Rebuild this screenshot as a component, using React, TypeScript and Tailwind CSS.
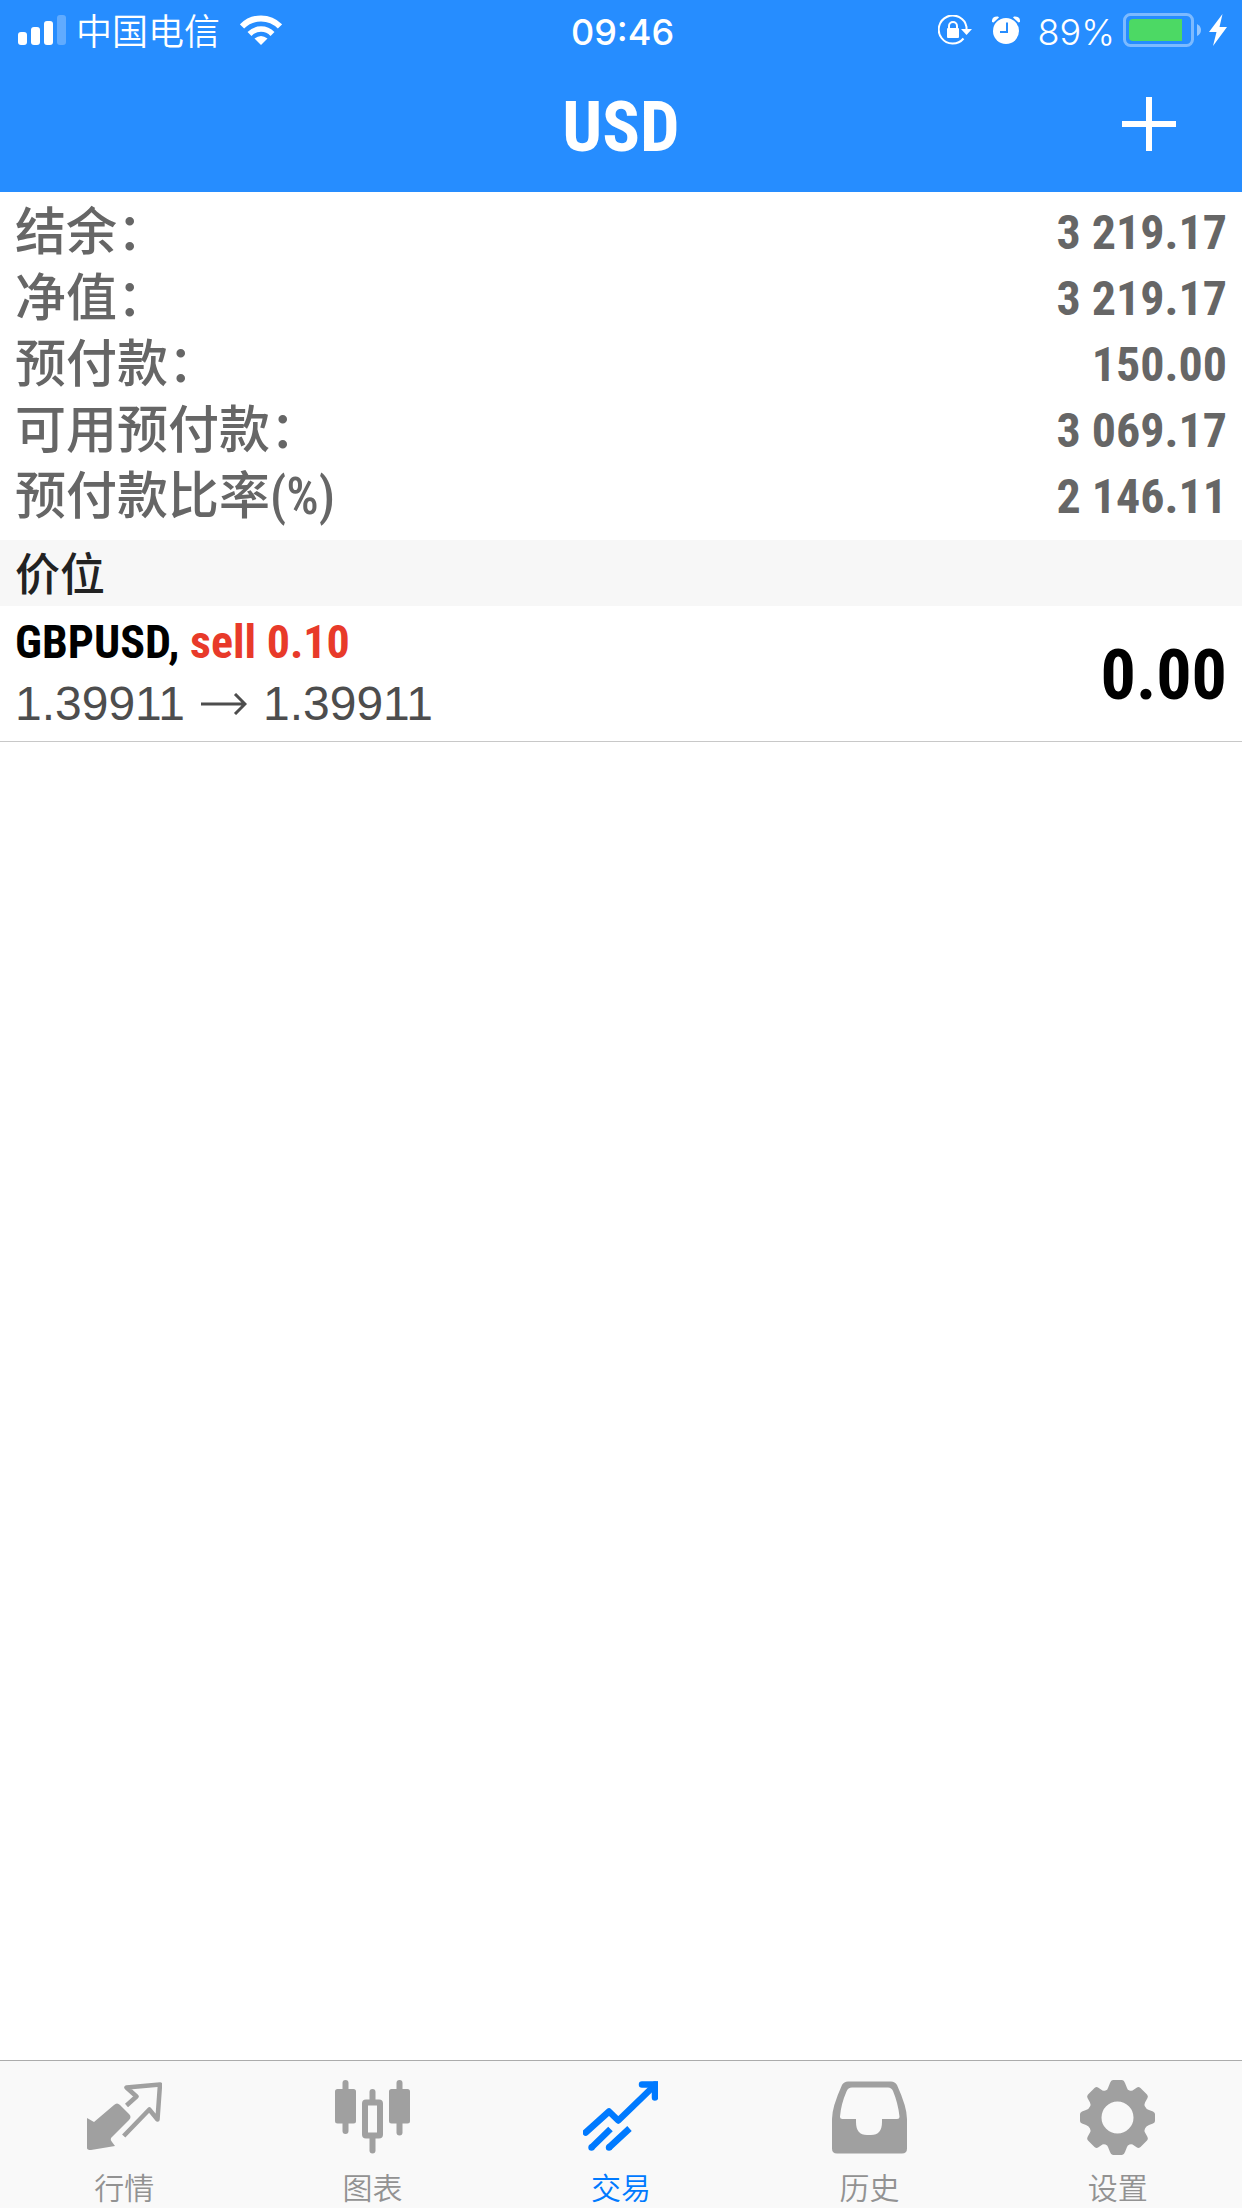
import { FC, ReactNode } from "react";

interface SummaryRow {
  label: string;
  value: string;
}

interface Tab {
  name: string;
  icon: ReactNode;
  active?: boolean;
}

const summary: SummaryRow[] = [
  { label: "结余：", value: "3 219.17" },
  { label: "净值：", value: "3 219.17" },
  { label: "预付款：", value: "150.00" },
  { label: "可用预付款：", value: "3 069.17" },
  { label: "预付款比率(%)", value: "2 146.11" },
];

const QuotesIcon: FC = () => (
  <svg viewBox="0 0 75 75" className="size-[75px]" fill="none">
    <path
      d="M0 38L7 42L27 25Q30 22 33 25L42 34Q45 37 42 40L24 58Q23 60 25 62L28 66L4 70Q0 70 0 68Z"
      fill="currentColor"
    />
    <path
      d="M39.5 25.5L49.5 16.5L39.5 7.5L73 4.5L70.5 39.5L62.3 29.5L36.7 56"
      stroke="currentColor"
      strokeWidth="4.5"
      strokeLinejoin="round"
    />
  </svg>
);

const ChartIcon: FC = () => (
  <svg viewBox="0 0 75 75" className="size-[75px]" fill="currentColor">
    <rect x="0" y="9" width="21" height="34.5" rx="2.5" />
    <rect x="7.5" y="0" width="6" height="54" rx="3" />
    <rect x="54" y="9" width="21" height="34.5" rx="2.5" />
    <rect x="61.5" y="0" width="6" height="55.5" rx="3" />
    <rect x="30" y="22.5" width="15" height="33" rx="1" fill="none" stroke="currentColor" strokeWidth="6" />
    <rect x="34.5" y="9" width="6" height="15" rx="3" />
    <rect x="34.5" y="54" width="6" height="19.5" rx="3" />
  </svg>
);

const TradeIcon: FC = () => (
  <svg viewBox="0 0 75 75" className="size-[75px]" fill="none" stroke="currentColor" strokeWidth="6.5">
    <path d="M2.7 52.5L26 31.5L35.3 40.5L72 5" strokeLinecap="round" strokeLinejoin="round" />
    <path d="M59 4.5H72V17.5" strokeLinecap="round" />
    <path d="M70 1.5H75V8Z" fill="currentColor" stroke="none" />
    <path d="M8.5 67.5L27.5 49M26 67.5L46.5 48.5" />
    <circle cx="8.5" cy="67.5" r="3.2" fill="currentColor" stroke="none" />
    <circle cx="26" cy="67.5" r="3.2" fill="currentColor" stroke="none" />
  </svg>
);

const HistoryIcon: FC = () => (
  <svg viewBox="0 0 75 75" className="size-[75px]" fill="currentColor" fillRule="evenodd">
    <path d="M16 1.5H59Q63 1.5 65 5Q75 27 75 39V68.5Q75 73.5 70 73.5H5Q0 73.5 0 68.5V39Q0 27 10 5Q12 1.5 16 1.5ZM20 7.5Q16 7.5 14.5 11.5Q9 24 8 36.5Q8 39 10.5 39H24V42Q24 55 35 55H39Q50 55 50 42V39H65Q67.5 39 67.5 36.5Q66 23 61 11Q59.5 7.5 56 7.5Z" />
  </svg>
);

const SettingsIcon: FC = () => (
  <svg viewBox="0 0 75 75" className="size-[75px]" fill="currentColor" fillRule="evenodd">
    <path d="M33 0H42Q44 0 45 3L47 8Q47.5 10 49.5 10.5Q52 11.5 54 9.5L57 7.5Q58.5 6.5 60.5 8L67 14.5Q68.5 16 67.5 18L65 22.5Q64 24.5 65 26.5Q66 29 69 30L73 31.5Q75 32.5 75 34V41Q75 42.5 73 43.5L69 45Q66 46 65 48.5Q64 50.5 65 52.5L67.5 57Q68.5 59 67 60.5L60.5 67Q58.5 68.5 57 67.5L54 65.5Q52 63.5 49.5 64.5Q47.5 65 47 67L45 72Q44 75 42 75H33Q31 75 30 72L28 67Q27.5 65 25.5 64.5Q23 63.5 21 65.5L18 67.5Q16.5 68.5 14.5 67L8 60.5Q6.5 59 7.5 57L10 52.5Q11 50.5 10 48.5Q9 46 6 45L2 43.5Q0 42.5 0 41V34Q0 32.5 2 31.5L6 30Q9 29 10 26.5Q11 24.5 10 22.5L7.5 18Q6.5 16 8 14.5L14.5 8Q16.5 6.5 18 7.5L21 9.5Q23 11.5 25.5 10.5Q27.5 10 28 8L30 3Q31 0 33 0ZM37.5 21.5A16 16 0 1 0 37.5 53.5A16 16 0 1 0 37.5 21.5Z" />
  </svg>
);

const tabs: Tab[] = [
  { name: "行情", icon: <QuotesIcon /> },
  { name: "图表", icon: <ChartIcon /> },
  { name: "交易", icon: <TradeIcon />, active: true },
  { name: "历史", icon: <HistoryIcon /> },
  { name: "设置", icon: <SettingsIcon /> },
];

const StatusBar: FC = () => (
  <div className="grid h-[60px] grid-cols-[1fr_auto_1fr] items-center pr-[15px] pl-[18px] text-4xl">
    <div className="flex items-center">
      {/* Signal */}
      <svg viewBox="0 0 48 30" className="h-[30px] w-12" fill="currentColor">
        <rect x="0" y="17" width="9" height="13" rx="3" />
        <rect x="13" y="12" width="9" height="18" rx="3" />
        <rect x="26" y="6" width="9" height="24" rx="3" />
        <rect x="39" y="0" width="9" height="30" rx="3" opacity="0.27" />
      </svg>
      <span className="ml-2.5 pt-1 font-[350]">中国电信</span>
      {/* Wifi */}
      <svg viewBox="0 0 42 30" className="ml-5 h-[30px] w-[42px]" fill="none" stroke="currentColor">
        <path d="M2 11.5A26.5 26.5 0 0 1 40 11.5" strokeWidth="6" />
        <path d="M9.5 19A16 16 0 0 1 32.5 19" strokeWidth="5.5" />
        <path d="M14.5 23.5Q21 18.5 27.5 23.5L21 30Z" fill="currentColor" stroke="none" />
      </svg>
    </div>

    <time className="pt-1 font-medium">09:46</time>

    <div className="flex items-center justify-end">
      {/* Rotation lock */}
      <svg viewBox="0 0 34 30" className="h-[30px] w-[34px]" fill="none" stroke="currentColor" strokeWidth="2">
        <path d="M25.5 23.5A14 14 0 1 1 28.5 12V15" />
        <path d="M23 14H34L28.5 20Z" fill="currentColor" stroke="none" />
        <rect x="9" y="13" width="12" height="10" rx="1" fill="currentColor" stroke="none" />
        <path d="M11 14V11A4 4 0 0 1 19 11V14" />
      </svg>
      {/* Alarm */}
      <svg viewBox="0 0 28 28" className="ml-5 size-7" fill="currentColor">
        <circle cx="14" cy="15" r="13" />
        <path d="M0 6Q-0.5 0 6 0.5L7 1.5L1.5 6.5ZM28 6Q28.5 0 22 0.5L21 1.5L26.5 6.5Z" />
        <path d="M15 6.5V16H8" fill="none" stroke="#268dff" strokeWidth="2" />
      </svg>
      <span className="ml-[18px] pt-1 font-[350]">89%</span>
      {/* Battery */}
      <svg viewBox="0 0 78 34" className="ml-2 h-[34px] w-[78px]">
        <rect x="1.5" y="1.5" width="68" height="31" rx="6" fill="none" stroke="#fff" strokeWidth="3" opacity="0.4" />
        <path d="M10 6H59V28H10Q6 28 6 24V10Q6 6 10 6Z" fill="#4cd964" />
        <path d="M74 11Q78 13 78 17T74 23Z" fill="#fff" opacity="0.5" />
      </svg>
      {/* Charging */}
      <svg viewBox="0 0 18 32" className="ml-2 h-8 w-[18px]" fill="currentColor">
        <path d="M13.5 0L0 18H7.5L4 32L18 13H10.5Z" />
      </svg>
    </div>
  </div>
);

const App: FC = () => {
  return (
    <div className="flex min-h-screen flex-col bg-white font-['Inter','Noto_Sans_CJK_SC',sans-serif]">
      {/* Header */}
      <header className="bg-[#268dff] text-white">
        <StatusBar />
        <div className="grid h-[132px] grid-cols-[1fr_auto_1fr] items-center px-[66px]">
          <h1 className="col-start-2 pt-0.5 font-['Roboto_Condensed','Roboto',sans-serif] text-[70px] leading-[70px] font-bold">
            USD
          </h1>
          <button aria-label="Add" className="justify-self-end pb-1">
            <svg viewBox="0 0 54 54" className="size-[54px]" stroke="currentColor" strokeWidth="6">
              <path d="M27 0V54M0 27H54" />
            </svg>
          </button>
        </div>
      </header>

      <main className="flex-1">
        {/* Account summary */}
        <dl className="px-[15px] pt-2 pb-2.5 font-['Roboto_Condensed','Noto_Sans_CJK_SC',sans-serif] text-[51px] leading-[66px] text-[#666666]">
          {summary.map((row) => (
            <div key={row.label} className="flex justify-between">
              <dt className="font-medium">{row.label}</dt>
              <dd className="text-5xl leading-[66px] font-bold">{row.value}</dd>
            </div>
          ))}
        </dl>

        {/* Positions */}
        <h2 className="bg-[#f7f7f7] px-[15px] pt-1.5 font-['Roboto','Noto_Sans_CJK_SC',sans-serif] text-[45px] leading-[60px] font-medium text-[#222222]">
          价位
        </h2>
        <div className="flex items-center justify-between border-b border-[#c8c8c8] px-[15px] pt-[5px] pb-1.5">
          <div>
            <p className="font-['Roboto_Condensed','Roboto',sans-serif] text-[46px] leading-[62px] font-bold text-black">
              GBPUSD, <span className="text-[#e83a2a]">sell 0.10</span>
            </p>
            <p className="flex items-center gap-4 font-['Liberation_Sans',sans-serif] text-5xl leading-[62px] text-[#4d4d4d]">
              <span>1.39911</span>
              <svg viewBox="0 0 46 22" className="h-[22px] w-[46px]" fill="none" stroke="currentColor" strokeWidth="3">
                <path d="M0 11H44M34 1L44 11L34 21" />
              </svg>
              <span>1.39911</span>
            </p>
          </div>
          <p className="pt-1 font-['Roboto_Condensed','Roboto',sans-serif] text-[70px] leading-[70px] font-bold text-black">
            0.00
          </p>
        </div>
      </main>

      {/* Tab bar */}
      <nav className="grid grid-cols-5 border-t border-[#acacac] bg-[#f9f9f9]">
        {tabs.map((tab) => (
          <a
            key={tab.name}
            href="#"
            className={`flex flex-col items-center gap-[11px] pt-[19px] pb-0.5 ${
              tab.active ? "text-[#007aff]" : "text-[#a0a0a0]"
            }`}
          >
            {tab.icon}
            <span
              className={`font-['Noto_Sans_CJK_SC',sans-serif] text-3xl leading-10 font-[350] ${
                tab.active ? "" : "text-[#929292]"
              }`}
            >
              {tab.name}
            </span>
          </a>
        ))}
      </nav>
    </div>
  );
};

export default App;
